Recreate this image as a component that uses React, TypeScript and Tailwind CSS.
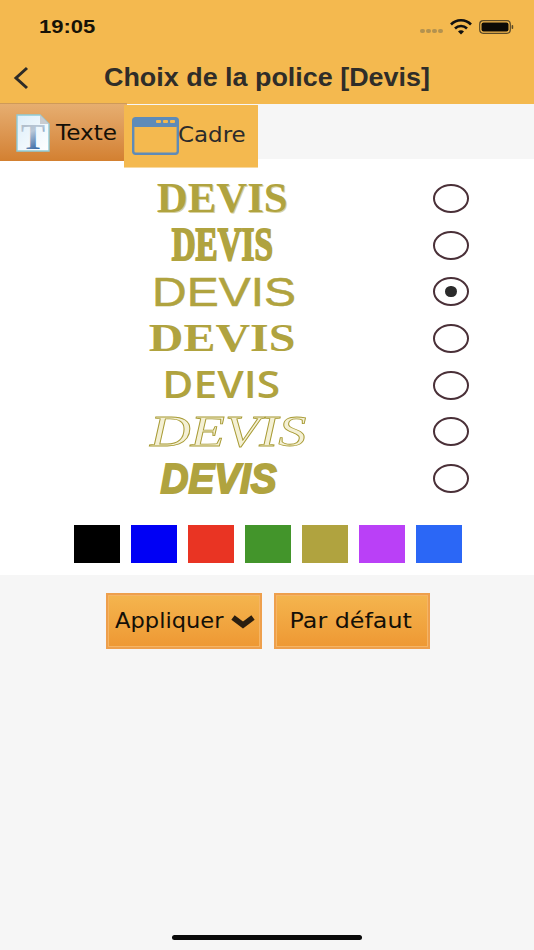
import React from "react";

const OLIVE = "text-[#b0a33f]";

function Radio({ on = false }: { on?: boolean }) {
  return (
    <div className="flex h-[29px] w-[36px] shrink-0 items-center justify-center rounded-[50%] border-2 border-[#4a3038] bg-white">
      {on && <div className="h-[11px] w-[12px] rounded-full bg-[#2b2b2b]" />}
    </div>
  );
}

function Row({ children, on = false }: { children: React.ReactNode; on?: boolean }) {
  return (
    <div className="flex h-[46.7px] items-center">
      <div className="flex w-[433px] items-center justify-center pl-[11px] leading-none">{children}</div>
      <Radio on={on} />
    </div>
  );
}

const btn =
  "flex h-[56px] w-[156px] items-center justify-center border-2 border-[#ee9f4c] bg-gradient-to-b from-[#f4b54e] to-[#ee9833] shadow-[inset_0_0_0_1px_#f5b565]";

export default function App() {
  return (
    <div className="flex h-[950px] w-[534px] flex-col overflow-hidden bg-[#f6f6f6] font-['Liberation_Sans',sans-serif]">
      <header className="h-[104px] shrink-0 bg-[#f4b94f]">
        <div className="flex h-[50px] items-center justify-between pl-[39px] pr-[20px] pt-[4px]">
          <span className="origin-left scale-x-[1.16] text-[19px] font-bold text-[#161208]">19:05</span>
          <div className="flex items-center gap-[7px]">
            <div className="mt-[8px] flex gap-[1px]">
              {[0, 1, 2, 3].map((i) => (
                <span key={i} className="h-[4px] w-[5px] rounded-full bg-[#b3924f]" />
              ))}
            </div>
            <svg width="22" height="16" viewBox="0 0 22 16">
              <path d="M1 5.5a14 14 0 0 1 20 0" fill="none" stroke="#111" strokeWidth="2.6" />
              <path d="M5 9.5a8.5 8.5 0 0 1 12 0" fill="none" stroke="#111" strokeWidth="2.6" />
              <path d="M8 12.6a4 4 0 0 1 6 0L11 15.6z" fill="#111" />
            </svg>
            <svg width="35" height="14" viewBox="0 0 35 14">
              <rect x="0.7" y="0.7" width="30.6" height="12.6" rx="3.5" fill="none" stroke="#5c4a26" strokeWidth="1.2" />
              <rect x="2.5" y="2.5" width="27" height="9" rx="2" fill="#0c0a06" />
              <rect x="32.6" y="5" width="1.6" height="4" rx="0.8" fill="#5c4a26" />
            </svg>
          </div>
        </div>
        <div className="flex h-[54px] items-center pt-[2px]">
          <svg className="ml-[12px] shrink-0" width="18" height="24" viewBox="0 0 18 24">
            <path d="M15 2 4 12l11 10" fill="none" stroke="#2d2b27" strokeWidth="3" />
          </svg>
          <div className="ml-[74px] origin-left scale-x-[1.076] whitespace-nowrap text-[25px] font-bold text-[#2f2d29]">
            Choix de la police [Devis]
          </div>
        </div>
      </header>

      <div className="relative z-10 flex h-[55px] shrink-0 font-['DejaVu_Sans',sans-serif]">
        <div className="-mt-px flex h-[58px] w-[127px] shrink-0 items-center border-t border-[#cf9a58] bg-gradient-to-b from-[#e6ae70] to-[#d38030] pl-[16px]">
          <svg width="34" height="46" viewBox="0 0 34 46" className="-mb-[8px] shrink-0">
            <defs>
              <linearGradient id="pg" x1="0" y1="0" x2="1" y2="1">
                <stop offset="0" stopColor="#dceefa" />
                <stop offset="1" stopColor="#ffffff" />
              </linearGradient>
              <linearGradient id="tg" x1="0" y1="0" x2="0.3" y2="1">
                <stop offset="0" stopColor="#a9b4bf" />
                <stop offset="0.45" stopColor="#b9c8d8" />
                <stop offset="1" stopColor="#255a9c" />
              </linearGradient>
            </defs>
            <path d="M1 1h23l9 9v27H1z" fill="url(#pg)" stroke="#8fcbd8" strokeWidth="1.4" />
            <path d="M24 1v9h9z" fill="#c9ccd0" />
            <text x="17" y="35" textAnchor="middle" fontFamily="Liberation Serif" fontWeight="700" fontSize="36" fill="url(#tg)">T</text>
          </svg>
          <span className="ml-[6px] mt-[1px] origin-left scale-x-[1.13] text-[20.5px] text-[#141008]">Texte</span>
        </div>
        <div className="-ml-[3px] mt-px flex h-[63px] w-[134px] shrink-0 items-center border-b border-[#f8d9a0] bg-[#f4b94f] pl-[8px]">
          <svg width="47" height="38" viewBox="0 0 47 38" className="shrink-0">
            <rect x="1.2" y="1.2" width="44.6" height="35.6" rx="2.5" fill="none" stroke="#5e8bb8" strokeWidth="2.4" />
            <rect x="1" y="1" width="45" height="9" rx="2" fill="#5e8bb8" />
            <rect x="24" y="3" width="5" height="3" rx="1" fill="#f4b94f" />
            <rect x="31" y="3" width="5" height="3" rx="1" fill="#f4b94f" />
            <rect x="38" y="3" width="5" height="3" rx="1" fill="#f4b94f" />
          </svg>
          <span className="-ml-px -mt-[2px] origin-left scale-x-[1.12] text-[20.5px] text-[#2b2b2b]">Cadre</span>
        </div>
      </div>

      <main className="h-[416px] shrink-0 bg-white pt-[16px]">
        <Row>
          <span className={`${OLIVE} scale-x-[1.02] font-['Liberation_Serif',serif] text-[42px] font-bold [text-shadow:1px_1px_0_#d8d2a0]`}>DEVIS</span>
        </Row>
        <Row>
          <span className={`${OLIVE} scale-x-[0.72] font-['Liberation_Serif',serif] text-[46px] font-bold [-webkit-text-stroke:2px_#b0a33f]`}>DEVIS</span>
        </Row>
        <Row on>
          <span className={`${OLIVE} ml-[5px] scale-x-[1.2] text-[40px] [-webkit-text-stroke:0.5px_#b0a33f]`}>DEVIS</span>
        </Row>
        <Row>
          <span className={`${OLIVE} scale-x-[1.2] font-['Liberation_Serif',serif] text-[40px] font-bold`}>DEVIS</span>
        </Row>
        <Row>
          <span className={`${OLIVE} -mt-[4px] -ml-[2px] scale-x-[1.15] font-['Open_Sans',sans-serif] text-[37px] font-semibold`}>DEVIS</span>
        </Row>
        <Row>
          <span className="ml-[12px] scale-x-[1.28] font-['Liberation_Serif',serif] text-[44px] italic text-[#f4f0d4] [-webkit-text-stroke:0.8px_#a89b35]">DEVIS</span>
        </Row>
        <Row>
          <span className={`${OLIVE} -ml-[6px] scale-x-[0.9] text-[43px] font-bold italic [-webkit-text-stroke:2px_#b0a33f]`}>DEVIS</span>
        </Row>

        <div className="mt-[23px] flex gap-[11px] pl-[74px]">
          {["bg-black", "bg-[#0000f5]", "bg-[#e93423]", "bg-[#43952b]", "bg-[#b0a33f]", "bg-[#ba40f7]", "bg-[#2b67f6]"].map((c) => (
            <div key={c} className={`h-[38px] w-[46px] ${c}`} />
          ))}
        </div>
      </main>

      <div className="mt-[18px] flex gap-[12px] pl-[106px] font-['DejaVu_Sans',sans-serif] text-[20.5px] text-[#141008]">
        <button className={`${btn} gap-[12px]`}>
          <span className="ml-[8px] scale-x-[1.1]">Appliquer</span>
          <svg width="26" height="15" viewBox="0 0 26 15">
            <path d="M3 3.5l10 7.5 10-7.5" fill="none" stroke="#2a1e10" strokeWidth="5.5" />
          </svg>
        </button>
        <button className={btn}>
          <span className="-ml-[2px] scale-x-[1.16]">Par défaut</span>
        </button>
      </div>

      <div className="mt-auto mb-[10px] ml-[172px] h-[5px] w-[190px] shrink-0 rounded-full bg-[#0a0a0a]" />
    </div>
  );
}
